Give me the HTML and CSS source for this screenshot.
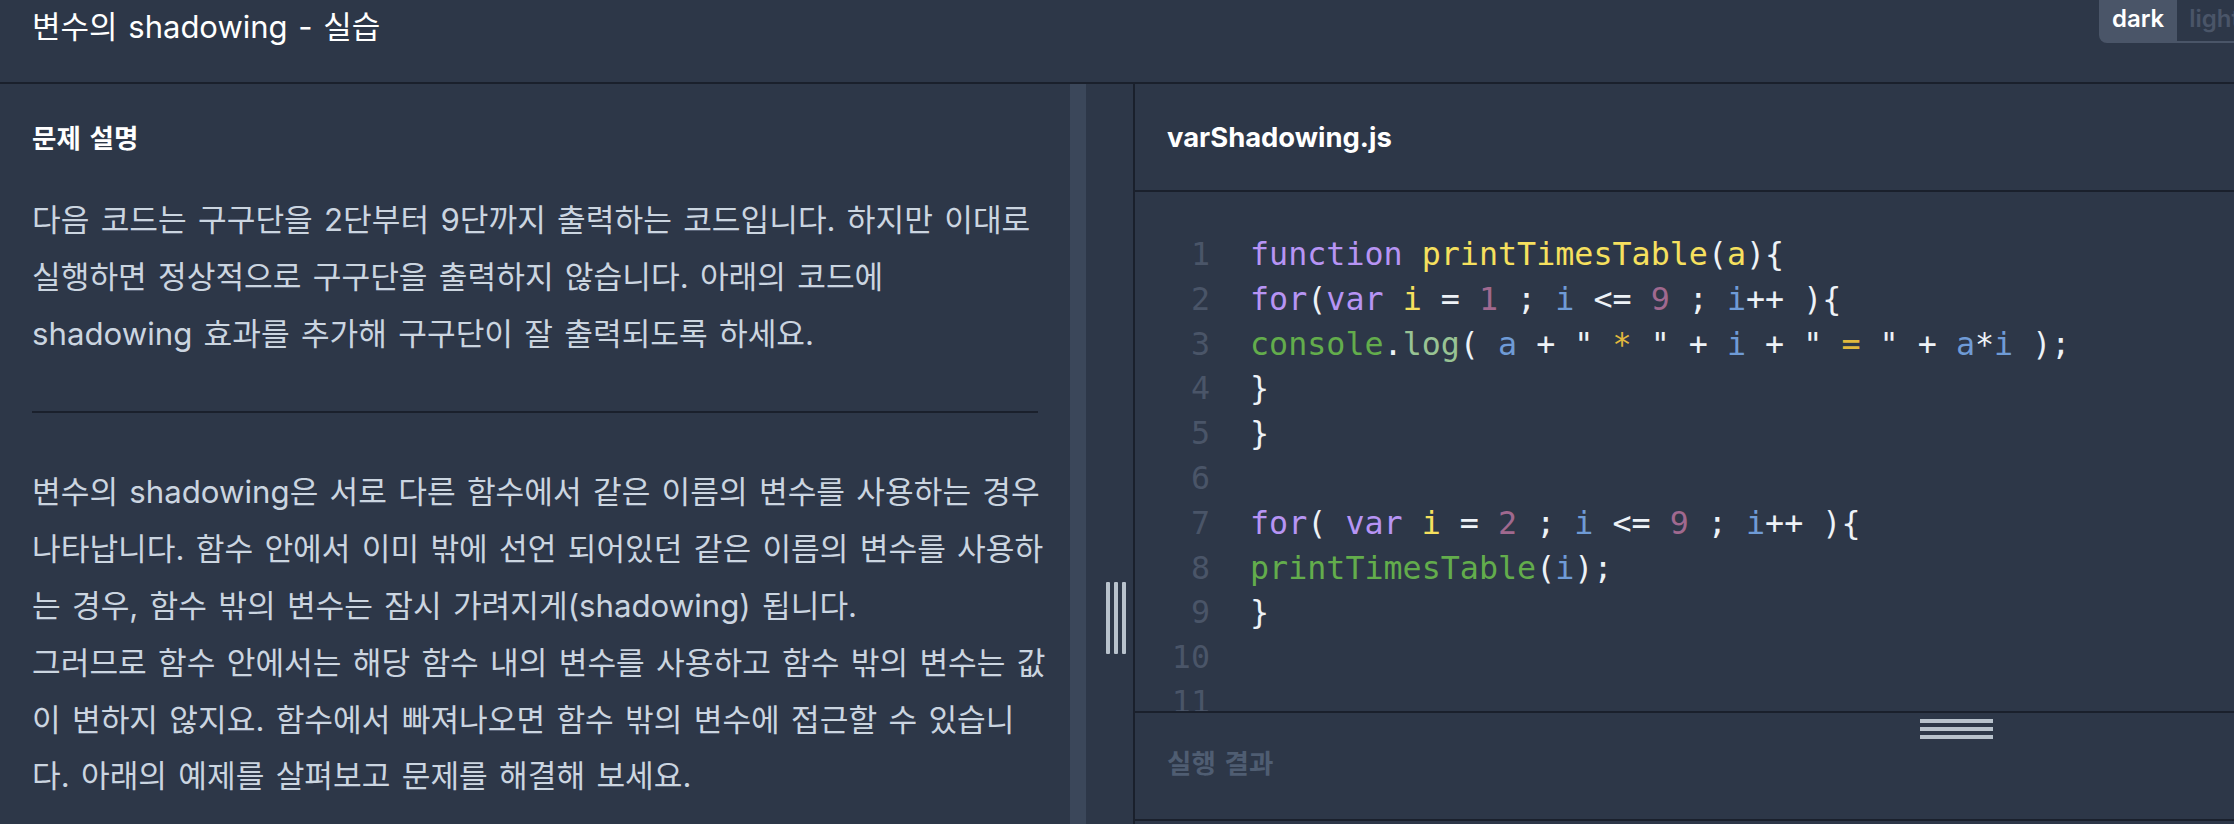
FILE: index.html
```html
<!DOCTYPE html>
<html lang="ko">
<head>
<meta charset="utf-8">
<title>변수의 shadowing - 실습</title>
<link rel="stylesheet" href="styles.css">
</head>
<body>
<header class="topbar">
  <h1 class="page-title">변수의 shadowing - 실습</h1>
  <div class="theme-toggle">
    <button class="theme-btn is-active">dark</button>
    <button class="theme-btn">light</button>
  </div>
</header>
<main class="workspace">
  <section class="problem">
    <h2 class="problem-title">문제 설명</h2>
    <p class="desc">다음 코드는 구구단을 2단부터 9단까지 출력하는 코드입니다. 하지만 이대로<br>실행하면 정상적으로 구구단을 출력하지 않습니다. 아래의 코드에<br>shadowing 효과를 추가해 구구단이 잘 출력되도록 하세요.</p>
    <hr class="divider">
    <p class="desc">변수의 shadowing은 서로 다른 함수에서 같은 이름의 변수를 사용하는 경우<br>나타납니다. 함수 안에서 이미 밖에 선언 되어있던 같은 이름의 변수를 사용하<br>는 경우, 함수 밖의 변수는 잠시 가려지게(shadowing) 됩니다.<br>그러므로 함수 안에서는 해당 함수 내의 변수를 사용하고 함수 밖의 변수는 값<br>이 변하지 않지요. 함수에서 빠져나오면 함수 밖의 변수에 접근할 수 있습니<br>다. 아래의 예제를 살펴보고 문제를 해결해 보세요.</p>
  </section>
  <div class="splitter">
    <div class="splitter-strip"></div>
    <div class="grip-v"><span></span><span></span><span></span></div>
  </div>
  <section class="ide">
    <div class="file-tab">varShadowing.js</div>
    <div class="editor">
      <ol class="code">
        <li class="line"><span class="ln">1</span><span class="src"><span class="kw">function</span> <span class="def">printTimesTable</span>(<span class="def">a</span>){</span></li>
        <li class="line"><span class="ln">2</span><span class="src"><span class="kw">for</span>(<span class="kw">var</span> <span class="def">i</span> = <span class="num">1</span> ; <span class="var">i</span> &lt;= <span class="num">9</span> ; <span class="var">i</span>++ ){</span></li>
        <li class="line"><span class="ln">3</span><span class="src"><span class="fn">console</span>.<span class="prop">log</span>( <span class="var">a</span> + " <span class="str">*</span> " + <span class="var">i</span> + " <span class="str">=</span> " + <span class="var">a</span>*<span class="var">i</span> );</span></li>
        <li class="line"><span class="ln">4</span><span class="src">}</span></li>
        <li class="line"><span class="ln">5</span><span class="src">}</span></li>
        <li class="line"><span class="ln">6</span><span class="src"></span></li>
        <li class="line"><span class="ln">7</span><span class="src"><span class="kw">for</span>( <span class="kw">var</span> <span class="def">i</span> = <span class="num">2</span> ; <span class="var">i</span> &lt;= <span class="num">9</span> ; <span class="var">i</span>++ ){</span></li>
        <li class="line"><span class="ln">8</span><span class="src"><span class="fn">printTimesTable</span>(<span class="var">i</span>);</span></li>
        <li class="line"><span class="ln">9</span><span class="src">}</span></li>
        <li class="line"><span class="ln">10</span><span class="src"></span></li>
        <li class="line"><span class="ln">11</span><span class="src"></span></li>
      </ol>
    </div>
    <div class="result">
      <div class="grip-h"><span></span><span></span><span></span></div>
      <h3 class="result-title">실행 결과</h3>
    </div>
  </section>
</main>
</body>
</html>
```

FILE: styles.css
```css
* { box-sizing: border-box; }

html, body { margin: 0; }

body {
  width: 2234px;
  height: 824px;
  overflow: hidden;
  background: #2d3748;
  color: #cbd5e0;
  font-family: Inter, "Noto Sans CJK KR", sans-serif;
}

.topbar {
  height: 84px;
  border-bottom: 2px solid #1a202c;
  display: flex;
  align-items: flex-start;
  padding-left: 32px;
}

.page-title {
  margin: 0;
  padding-top: 7px;
  font-size: 31px;
  line-height: 40px;
  font-weight: 400;
  word-spacing: 2px;
  color: #ffffff;
}

.theme-toggle {
  margin-left: auto;
  margin-right: -18px;
  flex-shrink: 0;
  display: flex;
  background: #4a5568;
  border-radius: 0 0 0 8px;
  padding-bottom: 2px;
}

.theme-btn {
  border: 0;
  height: 41px;
  padding: 0 13px 4px;
  font: 600 24px/37px Inter, sans-serif;
  background: transparent;
  color: #ffffff;
}

.theme-btn + .theme-btn {
  background: #2d3748;
  color: #4a5568;
  padding: 0 12px 4px;
}

.workspace {
  display: flex;
  height: 740px;
}

.problem {
  width: 1070px;
  flex-shrink: 0;
  padding: 34px 32px 0;
}

.problem-title {
  margin: 0 0 34px;
  font-size: 26.5px;
  line-height: 40px;
  font-weight: 700;
  word-spacing: 2.5px;
  color: #ffffff;
}

.desc {
  margin: 0;
  font-size: 31.2px;
  line-height: 56.8px;
  word-spacing: 2.5px;
  white-space: nowrap;
}

.divider {
  border: 0;
  border-top: 2px solid #1a202c;
  margin: 49px 0 51px;
}

.splitter {
  position: relative;
  width: 65px;
  flex-shrink: 0;
  border-right: 2px solid #1a202c;
}

.splitter-strip {
  width: 16px;
  height: 100%;
  background: #3b475a;
}

.grip-v {
  position: absolute;
  left: 36px;
  top: 498px;
  display: flex;
  gap: 4px;
}

.grip-v span {
  width: 4px;
  height: 72px;
  background: #b8c2cc;
  border-radius: 1px;
}

.ide {
  flex: 1;
  min-width: 0;
  display: flex;
  flex-direction: column;
}

.file-tab {
  height: 108px;
  flex-shrink: 0;
  border-bottom: 2px solid #1a202c;
  padding-left: 32px;
  display: flex;
  align-items: center;
  font: 700 27.4px Inter, sans-serif;
  color: #ffffff;
}

.editor {
  height: 521px;
  flex-shrink: 0;
  border-bottom: 2px solid #1a202c;
  overflow: hidden;
}

.code {
  list-style: none;
  margin: 0;
  padding: 40px 0 0;
  font-family: "DejaVu Sans Mono", monospace;
  font-size: 31.7px;
  line-height: 44.8px;
  color: #edf2f7;
}

.line {
  display: grid;
  grid-template-columns: 75px 1fr;
  column-gap: 40px;
  height: 44.8px;
  white-space: pre;
}

.ln { text-align: right; color: #4a5568; }
.kw { color: #b794f4; }
.def { color: #f6e05e; }
.num { color: #a0698f; }
.var { color: #6f9bd6; }
.fn { color: #63ad4c; }
.prop { color: #98c394; }
.str { color: #e2b93d; }

.result {
  position: relative;
  height: 108px;
  flex-shrink: 0;
  border-bottom: 2px solid #1a202c;
  padding: 0 32px 6px;
  display: flex;
  align-items: center;
}

.result-title {
  margin: 0;
  font-size: 26.5px;
  line-height: 1;
  font-weight: 700;
  word-spacing: 2.5px;
  color: #4f5d72;
}

.grip-h {
  position: absolute;
  left: 785px;
  top: 6px;
  display: flex;
  flex-direction: column;
  gap: 4px;
}

.grip-h span {
  width: 73px;
  height: 4px;
  background: #b8c2cc;
}
```
